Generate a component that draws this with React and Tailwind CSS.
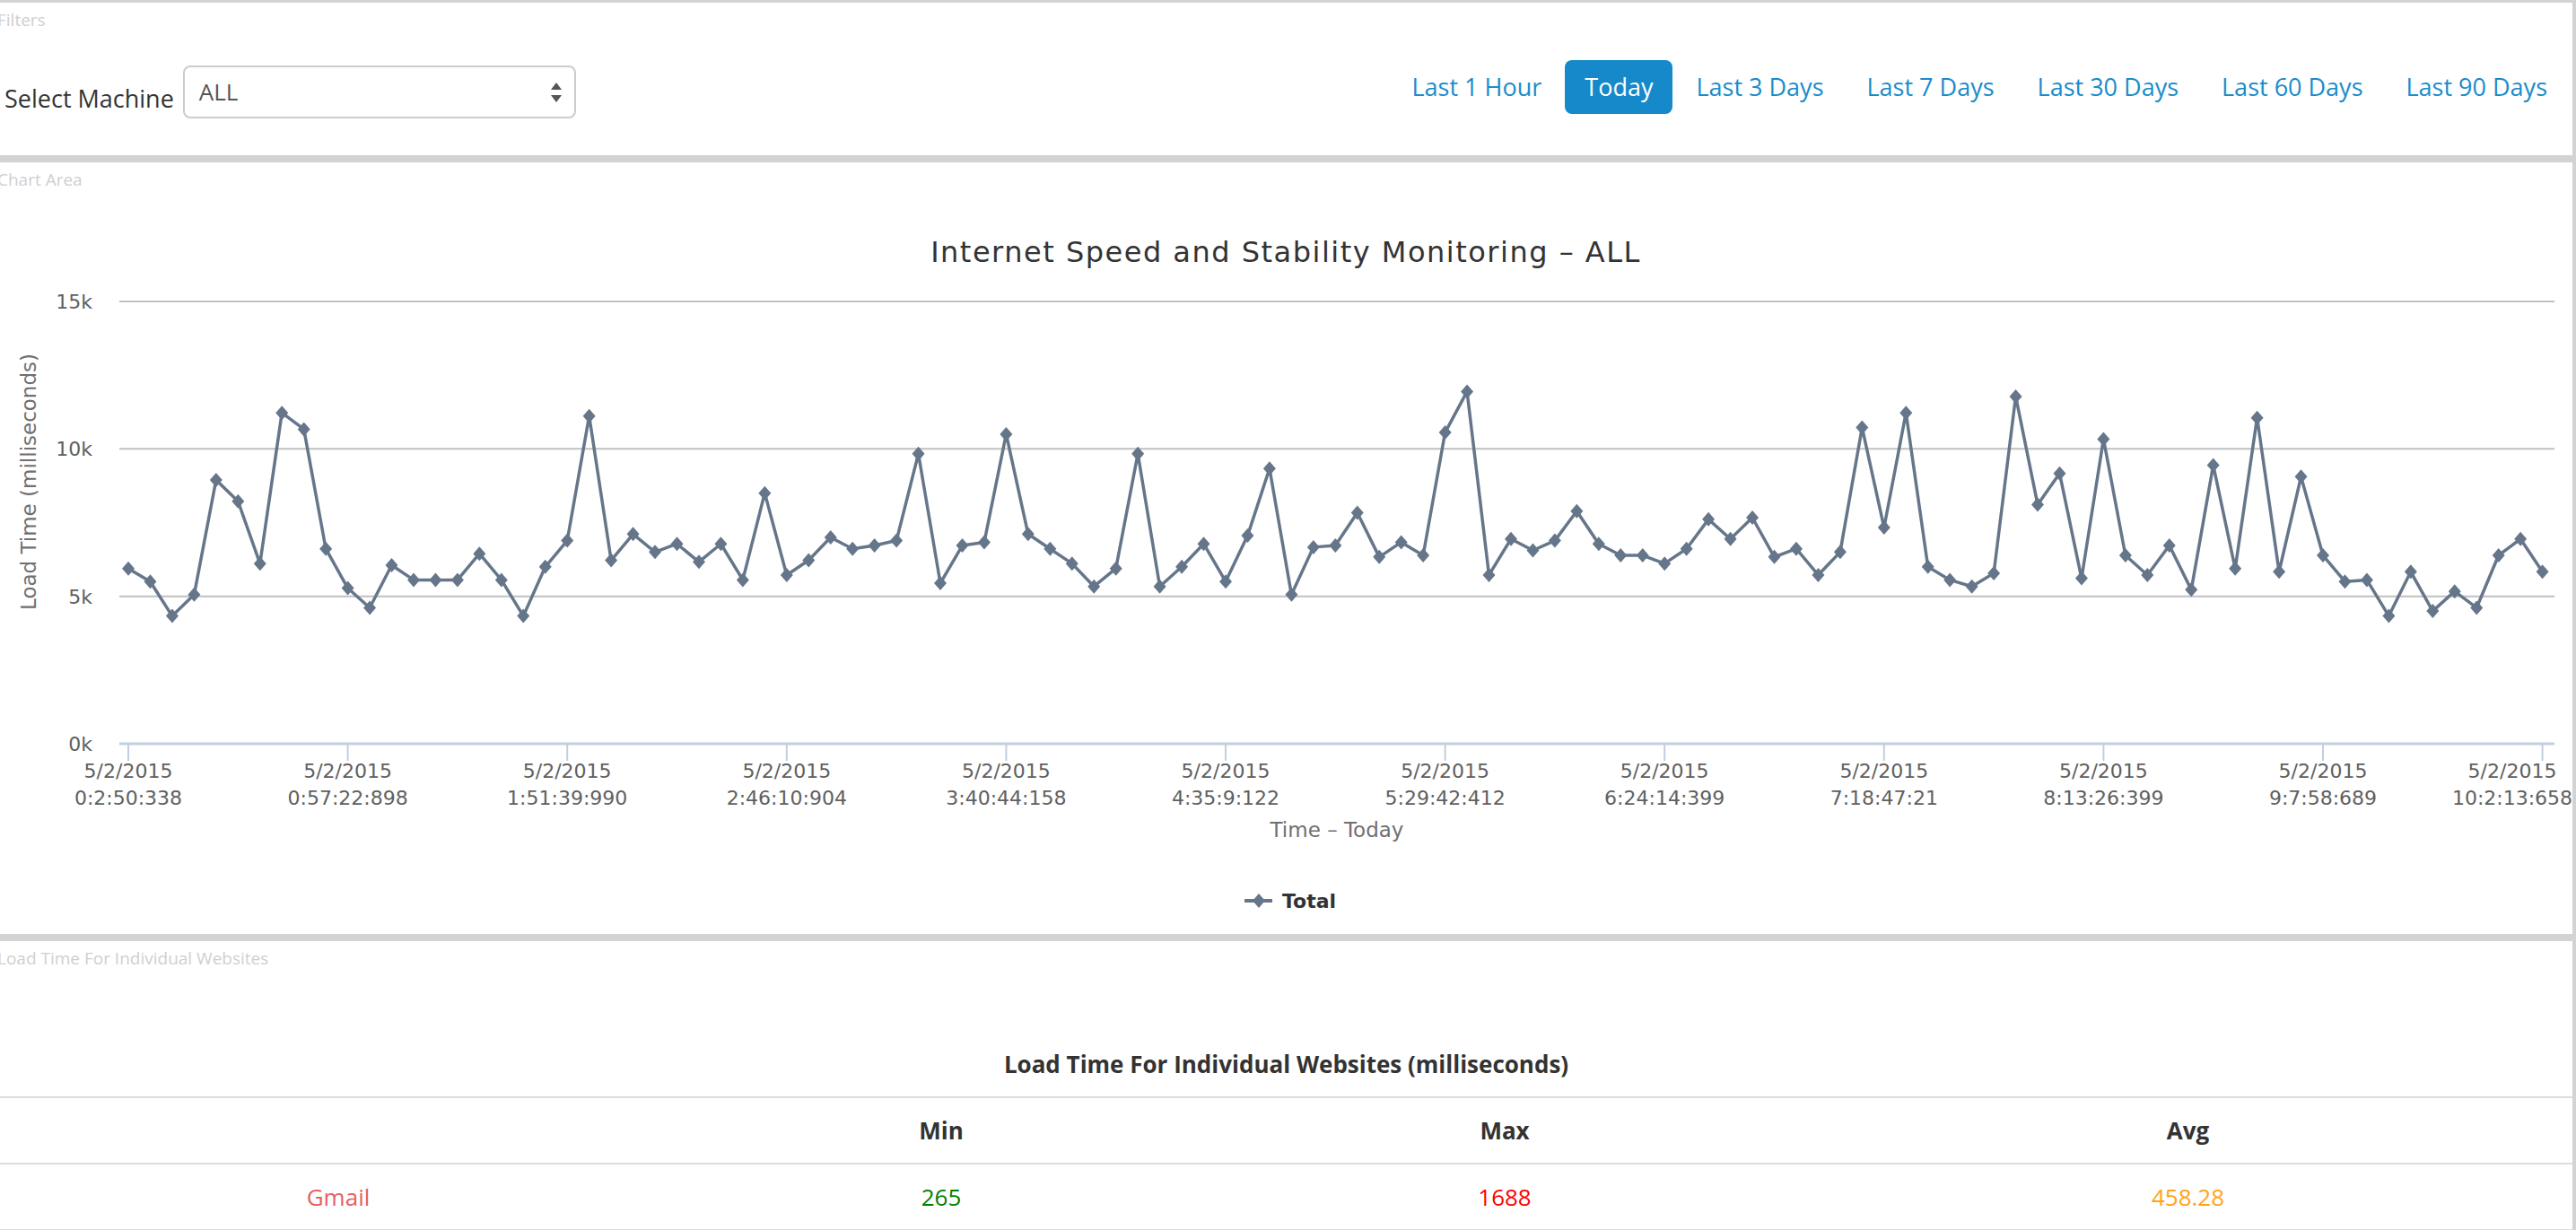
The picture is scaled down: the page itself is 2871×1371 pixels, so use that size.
import React from "react";

const LOAD_TIMES = [
  5944, 5500, 4333, 5056, 8944, 8222, 6111, 11222, 10667, 6611, 5278, 4611,
  6056, 5556, 5556, 5556, 6444, 5556, 4333, 6000, 6889, 11111, 6222, 7111,
  6500, 6778, 6167, 6778, 5556, 8500, 5722, 6222, 7000, 6611, 6722, 6889,
  9833, 5444, 6722, 6833, 10500, 7111, 6611, 6111, 5333, 5944, 9833, 5333,
  6000, 6778, 5500, 7056, 9333, 5056, 6667, 6722, 7833, 6333, 6833, 6389,
  10556, 11944, 5722, 6944, 6556, 6889, 7889, 6778, 6389, 6389, 6111, 6611,
  7611, 6944, 7667, 6333, 6611, 5722, 6500, 10722, 7333, 11222, 6000, 5556,
  5333, 5778, 11778, 8111, 9167, 5611, 10333, 6389, 5722, 6722, 5222, 9444,
  5944, 11056, 5833, 9056, 6389, 5500, 5556, 4333, 5833, 4500, 5167, 4611,
  6389, 6944, 5833,
];

const TICK_LABELS = [
  "0:2:50:338",
  "0:57:22:898",
  "1:51:39:990",
  "2:46:10:904",
  "3:40:44:158",
  "4:35:9:122",
  "5:29:42:412",
  "6:24:14:399",
  "7:18:47:21",
  "8:13:26:399",
  "9:7:58:689",
  "10:2:13:658",
];

const RANGES = [
  "Last 1 Hour",
  "Today",
  "Last 3 Days",
  "Last 7 Days",
  "Last 30 Days",
  "Last 60 Days",
  "Last 90 Days",
];

const FONT = "DejaVu Sans, Verdana, sans-serif";
const SERIES = "#66768a";

// plot geometry (svg units)
const PLOT_LEFT = 133;
const PLOT_RIGHT = 2847;
const Y_ZERO = 616;
const Y_TOP = 123;
const X_FIRST = 143;
const X_STEP = 24.46;

const yFor = (v) => Y_ZERO - (v * (Y_ZERO - Y_TOP)) / 15000;
const xFor = (i) => X_FIRST + i * X_STEP;

const Diamond = ({ x, y }) => (
  <polygon
    points={`${x},${y - 8} ${x + 7},${y} ${x},${y + 8} ${x - 7},${y}`}
    fill={SERIES}
  />
);

const SpeedChart = () => {
  const points = LOAD_TIMES.map((v, i) => [xFor(i), yFor(v)]);
  const path = points.map(([x, y], i) => `${i ? "L" : "M"}${x} ${y}`).join(" ");

  return (
    <svg className="block" width="100%" height="828" viewBox="0 0 2867 828">
      <text
        x="1433"
        y="79"
        textAnchor="middle"
        fontFamily={FONT}
        fontSize="32"
        letterSpacing="1.5"
        fill="#333333"
      >
        Internet Speed and Stability Monitoring – ALL
      </text>

      {/* grid + y labels */}
      {[0, 5000, 10000, 15000].map((v) => (
        <g key={v}>
          {v > 0 && (
            <line
              x1={PLOT_LEFT}
              x2={PLOT_RIGHT}
              y1={yFor(v)}
              y2={yFor(v)}
              stroke="#c0c0c0"
              strokeWidth="2"
            />
          )}
          <text
            x="103"
            y={yFor(v) + 8}
            textAnchor="end"
            fontFamily={FONT}
            fontSize="22"
            fill="#606060"
          >
            {v / 1000}k
          </text>
        </g>
      ))}

      <text
        transform="translate(40 324) rotate(-90)"
        textAnchor="middle"
        fontFamily={FONT}
        fontSize="23"
        fill="#707070"
      >
        Load Time (milliseconds)
      </text>

      {/* x axis */}
      <line
        x1={PLOT_LEFT}
        x2={PLOT_RIGHT}
        y1={Y_ZERO}
        y2={Y_ZERO}
        stroke="#c0d0e0"
        strokeWidth="3"
      />
      {TICK_LABELS.map((label, i) => {
        const x = xFor(i * 10);
        // last label gets pushed inside the chart edge
        const lx = i === TICK_LABELS.length - 1 ? 2800 : x;
        return (
          <g key={label}>
            <line x1={x} x2={x} y1={Y_ZERO} y2={Y_ZERO + 19} stroke="#c0d0e0" strokeWidth="2" />
            <text textAnchor="middle" fontFamily={FONT} fontSize="22" fill="#606060">
              <tspan x={lx} y="654">
                5/2/2015
              </tspan>
              <tspan x={lx} y="684">
                {label}
              </tspan>
            </text>
          </g>
        );
      })}
      <text
        x="1490"
        y="720"
        textAnchor="middle"
        fontFamily={FONT}
        fontSize="23"
        fill="#707070"
      >
        Time – Today
      </text>

      {/* series */}
      <path d={path} fill="none" stroke={SERIES} strokeWidth="3.5" strokeLinejoin="round" />
      {points.map(([x, y], i) => (
        <Diamond key={i} x={x} y={y} />
      ))}

      {/* legend */}
      <line x1="1387" x2="1418" y1="791" y2="791" stroke={SERIES} strokeWidth="4" />
      <Diamond x={1403} y={791} />
      <text x="1429" y="799" fontFamily={FONT} fontSize="22" fontWeight="bold" fill="#333333">
        Total
      </text>
    </svg>
  );
};

const PanelLabel = ({ children }) => (
  <div className="ml-[-3px] mt-[7px] text-[19px] leading-[24px] text-[#cfcfcf]">
    {children}
  </div>
);

export default function App() {
  return (
    <div className="min-h-screen bg-[#d3d3d3] pt-[3px] pr-[4px] flex flex-col gap-[8px] font-['Open_Sans',sans-serif] text-[#333]">
      {/* Filters */}
      <div className="h-[170px] bg-white flex flex-col">
        <PanelLabel>Filters</PanelLabel>
        <div className="flex justify-between items-start">
          <div className="flex items-start gap-[10px] pl-[5px] mt-[39px]">
            <span className="mt-[19px] text-[27px] leading-[36px] text-[#333]">
              Select Machine
            </span>
            <div className="w-[438px] h-[59px] border-2 border-[#cccccc] rounded-[8px] flex items-center justify-between pl-[16px] pr-[14px]">
              <span className="text-[26px] text-[#555]">ALL</span>
              <svg width="12" height="22" viewBox="0 0 12 22">
                <polygon points="0,8 6,0 12,8" fill="#555" />
                <polygon points="0,14 12,14 6,22" fill="#555" />
              </svg>
            </div>
          </div>
          <ul className="flex items-center gap-[4px] mt-[33px] pr-[6px]">
            {RANGES.map((r) => (
              <li
                key={r}
                className={`h-[60px] px-[22px] flex items-center rounded-[8px] text-[27px] ${
                  r === "Today" ? "bg-[#1589c9] text-white" : "text-[#1a8ccb]"
                }`}
              >
                {r}
              </li>
            ))}
          </ul>
        </div>
      </div>

      {/* Chart */}
      <div className="h-[860px] bg-white flex flex-col">
        <div className="h-[32px] flex flex-col">
          <PanelLabel>Chart Area</PanelLabel>
        </div>
        <SpeedChart />
      </div>

      {/* Table */}
      <div className="flex-1 bg-white flex flex-col">
        <PanelLabel>Load Time For Individual Websites</PanelLabel>
        <div className="mt-[88px] text-center text-[26px] leading-[36px] font-bold text-[#333]">
          Load Time For Individual Websites (milliseconds)
        </div>
        <table className="mt-[18px] w-full border-collapse text-[26px] text-center">
          <colgroup>
            <col className="w-[754px]" />
            <col className="w-[590px]" />
            <col className="w-[666px]" />
            <col />
          </colgroup>
          <thead>
            <tr className="h-[74px] border-t-2 border-[#dddddd]">
              <th></th>
              <th className="font-bold text-[#333]">Min</th>
              <th className="font-bold text-[#333]">Max</th>
              <th className="font-bold text-[#333]">Avg</th>
            </tr>
          </thead>
          <tbody>
            <tr className="h-[74px] border-t-2 border-b-2 border-[#dddddd]">
              <td className="text-[#e8605f]">Gmail</td>
              <td className="text-[#008000]">265</td>
              <td className="text-[#ff0000]">1688</td>
              <td className="text-[#ffa319]">458.28</td>
            </tr>
          </tbody>
        </table>
      </div>
    </div>
  );
}
